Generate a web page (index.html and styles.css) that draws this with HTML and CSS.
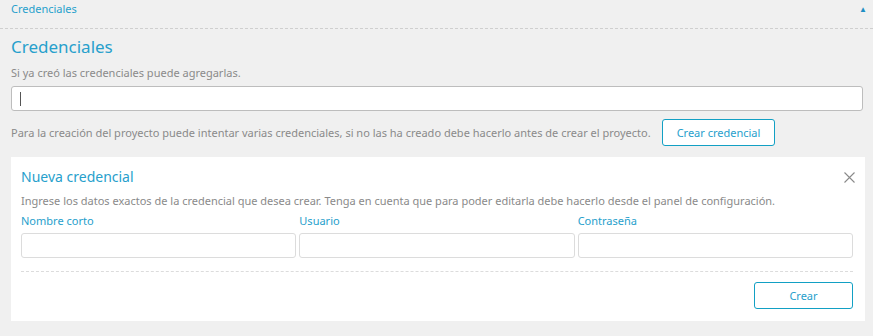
FILE: index.html
```html
<!DOCTYPE html>
<html lang="es">
<head>
    <meta charset="UTF-8">
    <title>Credenciales</title>
    <link rel="stylesheet" href="styles.css">
</head>
<body>
    <div class="section">
        <div class="section-header">
            <span>Credenciales</span>
            <span class="arrow">&#9650;</span>
        </div>
        <div class="section-body">
            <h2 class="title">Credenciales</h2>
            <p class="hint">Si ya creó las credenciales puede agregarlas.</p>
            <div class="search"><span class="caret"></span></div>
            <div class="create-row">
                <p class="hint">Para la creación del proyecto puede intentar varias credenciales, si no las ha creado debe hacerlo antes de crear el proyecto.</p>
                <button class="btn">Crear credencial</button>
            </div>

            <div class="panel">
                <div class="panel-head">
                    <h3 class="panel-title">Nueva credencial</h3>
                    <!-- close icon -->
                    <svg class="close" width="11" height="11" viewBox="0 0 11 11">
                        <path d="M0.5 0.5 L10.5 10.5 M10.5 0.5 L0.5 10.5" stroke="#8a8a8a" stroke-width="1.1" fill="none"/>
                    </svg>
                </div>
                <p class="hint small">Ingrese los datos exactos de la credencial que desea crear. Tenga en cuenta que para poder editarla debe hacerlo desde el panel de configuración.</p>
                <div class="fields">
                    <label class="field">
                        <span class="label">Nombre corto</span>
                        <input type="text">
                    </label>
                    <label class="field">
                        <span class="label">Usuario</span>
                        <input type="text">
                    </label>
                    <label class="field">
                        <span class="label">Contraseña</span>
                        <input type="password">
                    </label>
                </div>
                <div class="panel-foot">
                    <button class="btn btn-wide">Crear</button>
                </div>
            </div>
        </div>
    </div>
</body>
</html>
```
FILE: styles.css
```css
body {
    margin: 0;
    background-color: #f0f0f0;
    font-family: 'Noto Sans', sans-serif;
    font-size: 11px;
    color: #8a8a8a;
}

.section-header {
    display: flex;
    justify-content: space-between;
    align-items: flex-start;
    height: 27px;
    padding: 1px 6px 0 11px;
    color: #27a0cc;
    font-size: 11px;
    line-height: 15px;
    border-bottom: 1px dashed #cfcfcf;
}

.arrow {
    font-size: 8px;
    color: #1e8fc4;
}

.section-body {
    padding: 0 10px 0 11px;
}

.title {
    margin: 7px 0 0;
    font-size: 17px;
    font-weight: normal;
    color: #27a0cc;
    line-height: 22px;
}

.hint {
    margin: 0;
    line-height: 16px;
}

.section-body > .hint {
    margin-top: 7px;
}

.search {
    height: 23px;
    margin-top: 5px;
    background: #fff;
    border: 1px solid #bdbdbd;
    border-radius: 3px;
    display: flex;
    align-items: center;
    padding-left: 8px;
}

.caret {
    width: 1px;
    height: 14px;
    background: #555;
}

.create-row {
    display: flex;
    align-items: center;
    gap: 11px;
    margin-top: 8px;
}

.btn {
    font-family: inherit;
    font-size: 11px;
    color: #27a0cc;
    background: #fff;
    border: 1px solid #12a0c4;
    border-radius: 3px;
    height: 27px;
    padding: 0 14px;
    cursor: pointer;
}

.btn-wide {
    width: 99px;
}

.panel {
    background: #fff;
    margin: 11px -2px 0 0;
    padding: 10px 12px 12px 10px;
}

.panel-head {
    display: flex;
    justify-content: space-between;
    align-items: center;
}

.panel-title {
    margin: 0;
    font-size: 14px;
    font-weight: normal;
    color: #27a0cc;
    line-height: 20px;
}

.close {
    margin-right: -2px;
}

.small {
    margin-top: 6px;
}

.fields {
    display: grid;
    grid-template-columns: 1fr 1fr 1fr;
    gap: 3px;
    margin-top: 4px;
}

.field {
    display: flex;
    flex-direction: column;
}

.label {
    color: #27a0cc;
    line-height: 16px;
    margin-bottom: 4px;
}

.field input {
    height: 25px;
    box-sizing: border-box;
    border: 1px solid #dcdcdc;
    border-radius: 3px;
    padding: 0 6px;
    margin: 0;
}

.panel-foot {
    display: flex;
    justify-content: flex-end;
    margin-top: 13px;
    padding-top: 10px;
    border-top: 1px dashed #dcdcdc;
}
```
